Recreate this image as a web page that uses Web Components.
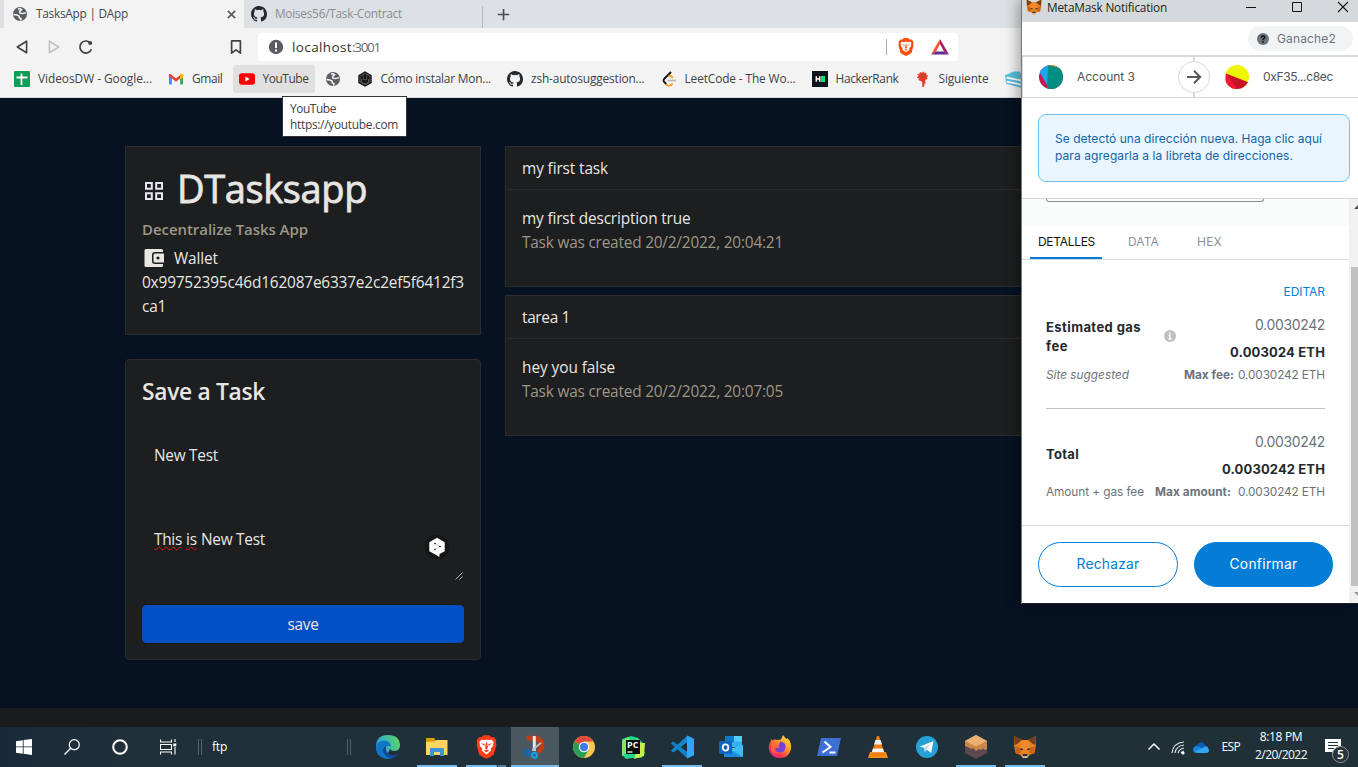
<!DOCTYPE html>
<html lang="es">
<head>
<meta charset="utf-8">
<title>TasksApp | DApp</title>
<style>
html,body{margin:0;height:100%;overflow:hidden;background:#061122}
body{font-family:"Open Sans","Noto Sans",sans-serif}
</style>
</head>
<body>
<desktop-screen></desktop-screen>
<script>
const GLOBE='<circle cx="8" cy="8" r="7" fill="#5a5f64"/><path d="M1.500 8.500 5 9l2.200 1.200v1.600l1.800.8-.4 2M6 3.200 8 2.600l1.600 1.200L7.600 5.400l.4 1.800 2.400.4 3.600-1" fill="none" stroke="#f3f3f3" stroke-width="1.500"/>';
const GITHUB='<path fill="#24292e" d="M8 0C3.58 0 0 3.58 0 8c0 3.54 2.29 6.53 5.47 7.59.4.07.55-.17.55-.38 0-.19-.01-.82-.01-1.49-2.01.37-2.53-.49-2.69-.94-.09-.23-.48-.94-.82-1.13-.28-.15-.68-.52-.01-.53.63-.01 1.08.58 1.23.82.72 1.21 1.87.87 2.33.66.07-.52.28-.87.51-1.07-1.78-.2-3.64-.89-3.64-3.95 0-.87.31-1.59.82-2.15-.08-.2-.36-1.02.08-2.12 0 0 .67-.21 2.2.82a7.4 7.4 0 0 1 4 0c1.53-1.04 2.2-.82 2.2-.82.44 1.1.16 1.92.08 2.12.51.56.82 1.27.82 2.15 0 3.07-1.87 3.75-3.65 3.95.29.25.54.73.54 1.48 0 1.07-.01 1.93-.01 2.2 0 .21.15.46.55.38A8 8 0 0 0 16 8c0-4.42-3.58-8-8-8z"/>';
const FOX='<path fill="#e8821e" d="M1 1l8 4h6l8-4 0 9-1.500 8-5 2-2.500 3h-4l-2.500-3-5-2L1 10z"/><path fill="#763e1a" d="M1 1l8 4-5 4-2.500 1zM23 1l-8 4 5 4 2.500 1z"/><path fill="#f08a2c" d="M9 5h6l2 8-5 2-5-2z"/><path fill="#cd6116" d="M2 11l5 2 1 5-5 1zM22 11l-5 2-1 5 5 1z"/><path fill="#233447" d="M6.500 13.500l3 0 .5 1.800-2.500-.5zM17.500 13.500l-3 0-.5 1.800 2.500-.5zM9.800 19h4.400l.5 2h-5.400z"/><path fill="#d7c1b3" d="M8 20l1 0 .8 1.500h4.400L15 20h1l-2 3h-4z"/>';
const ICONS={
globe:['0 0 16 16',GLOBE],
github:['0 0 16 16',GITHUB],
close:['0 0 16 16','<path d="M3.500 3.500l9 9M12.500 3.500l-9 9" stroke="#55585c" stroke-width="1.9"/>'],
plus:['0 0 16 16','<path d="M8 2v12M2 8h12" stroke="#4d5155" stroke-width="1.8"/>'],
back:['0 0 16 16','<path d="M12.600 2.200v11.600L3.300 8z" fill="none" stroke="#3f4144" stroke-width="1.6" stroke-linejoin="round"/>'],
fwd:['0 0 16 16','<path d="M3.400 2.200v11.600L12.700 8z" fill="none" stroke="#bfc1c3" stroke-width="1.6" stroke-linejoin="round"/>'],
reload:['0 0 16 16','<path d="M13.500 10.200A6 6 0 1 1 12.200 3.800" fill="none" stroke="#3f4144" stroke-width="1.7"/><circle cx="12.200" cy="4" r="2" fill="#3f4144"/>'],
mark:['0 0 16 16','<path d="M3.600 1.800h8.800v12.400L8 10.800l-4.400 3.400z" fill="none" stroke="#3f4144" stroke-width="1.7" stroke-linejoin="round"/>'],
warn:['0 0 16 16','<circle cx="8" cy="8" r="7.200" fill="#5a5d62"/><path d="M8 3.500v5.500M8 10.500v2" stroke="#fff" stroke-width="2"/>'],
brave:['0 0 18 20','<path fill="#fb4d0a" d="M5 1.500L6.500 0h5L13 1.500l2.500.2L17.500 4.500 17 6l.5 2-2.200 8.500L12 18.800 9 20l-3-1.200-3.300-2.300L.5 8 1 6 .5 4.500 2.500 1.700z"/><path fill="#fff" d="M4 4.200l2.500.3L9 4l2.500.5 2.500-.3 1.200 2-.7 1.600.3 1.200-2.300 2.600.6 1.600L9 16l-4.100-2.800.6-1.600L3.200 9l.3-1.200-.7-1.600z"/><path fill="#fb4d0a" d="M4.800 7.200l2.600.4-.3 1.400zM13.200 7.200l-2.600.4.3 1.400zM8.600 7h.8l.6 4L9 12l-1-1zM7 13.200l2-.6 2 .6-2 1z"/>'],
bravebig:['0 0 18 20','<path fill="#fb3d1a" d="M5 1.500L6.500 0h5L13 1.500l2.500.2L17.500 4.500 17 6l.5 2-2.200 8.500L12 18.800 9 20l-3-1.200-3.300-2.300L.5 8 1 6 .5 4.500 2.500 1.700z"/><path fill="#fff" d="M4.500 3.700l2 .4L9 3.700l2.500.4 2-.4 1.700 2.300-.6 1.600.2 1.200-2.300 2.600.6 1.600L9 16.500 4.900 13l.6-1.600L3.200 9l.2-1.400L2.800 6z"/><path fill="#fb3d1a" d="M4.500 6.800l3 .6-.4 1.800zM13.500 6.800l-3 .6.4 1.800zM8.500 6h1l.7 5L9 12l-1.200-1zM6.500 13L9 12.300l2.500.7L9 14.400z"/>'],
bat:['0 0 18 16','<path fill="#ff4f2b" d="M9 0L0 15.500l5-3L9 5z"/><path fill="#9e1f63" d="M9 0l9 15.500-5-3L9 5z"/><path fill="#5f2e91" d="M0 15.500h18l-5-3H5z"/>'],
sheets:['0 0 16 16','<rect width="16" height="16" rx="1" fill="#0f9d58"/><path d="M2.500 6.500h11M7.500 2.500v11.500" stroke="#fff" stroke-width="1.800"/>'],
gmail:['0 0 16 16','<path d="M1 3.500h2.800v10H2A1 1 0 0 1 1 12.500z" fill="#4285f4"/><path d="M12.200 3.500H15v9a1 1 0 0 1-1 1h-1.800z" fill="#34a853"/><path d="M1.200 3.700 8 9l6.800-5.300" fill="none" stroke="#ea4335" stroke-width="2.700"/><path d="M12.200 4l1.500-1.300Q15 2.600 15 4v2.500l-2.800 2z" fill="#fbbc04"/>'],
youtube:['0 0 16 16','<rect y="2.300" width="16" height="11.500" rx="2.800" fill="#f00"/><path d="M6.300 5.600v5L10.700 8z" fill="#fff"/>'],
hex:['0 0 16 16','<path d="M8 .3l6.700 3.900v7.700L8 15.800 1.300 11.900V4.200z" fill="#111"/><path d="M8 2.200l5 2.900v5.900l-5 2.900L3 11V5.100z" fill="none" stroke="#777" stroke-width=".7"/><path d="M6.300 3.500v5.300h3.400V3.500M4.500 8v3L8 13l3.500-2V8" stroke="#777" fill="none" stroke-width=".7"/>'],
leet:['0 0 16 16','<path d="M10 1 3 8.200Q2 9.500 3 10.700l2.500 2.700" fill="none" stroke="#111" stroke-width="1.900"/><path d="M5 13l1.200 1.300q1.600 1.200 3.500 0l2-1.800M7.500 5.200q2-1 3 .2l1.500 1.500" fill="none" stroke="#f9a11b" stroke-width="1.900"/><path d="M6.500 9.500H15" stroke="#b8b8b8" stroke-width="1.800"/>'],
hr:['0 0 16 16','<rect width="16" height="16" fill="#0e141e"/><path d="M4.300 5.200v5.600M7.700 5.200v5.600M4 8h4" stroke="#fff" stroke-width="1.500"/><path d="M9 5h4v6H9z" fill="#00e867"/>'],
rooster:['0 0 16 16','<path d="M5 1.500l2 .8L8.300.8l.8 1.600 2-.5-.2 2L13 5l-1.700 1 1 2-2 .2-.5 2.500.7 1.500L9 12v3.500H7.500V11L5.500 9.500 3.600 9 5 7.500 2 6.500l2-1.500L2.500 3.500l2.200-.3z" fill="#e8381f" stroke="#e8381f" stroke-width=".6"/><circle cx="8" cy="5.500" r="1.300" fill="#8b5a4f"/>'],
cyan:['0 0 16 16','<path d="M0 4l8-3.500h6L16 6v10L1 12z" fill="#5bbfdd"/><path d="M1.500 6.200 16 9M1.500 10 16 13" stroke="#fff" stroke-width="1.600"/>'],
grid:['0 0 20 20','<path d="M2 2h5.800v5.800H2zM12.200 2H18v5.800h-5.800zM2 12.200h5.800V18H2zM12.200 12.200H18V18h-5.800z" fill="none" stroke="#e8e6f0" stroke-width="2"/>'],
wallet:['0 0 20 20','<path fill="#e8e6e3" d="M2 1h15.500q1.500 0 1.500 1.500V4h-8Q8 4 8 7v6q0 3 3 3h8v1.500q0 1.500-1.500 1.500H2Q.5 19 .5 17.500v-15Q.5 1 2 1z"/><path fill="#e8e6e3" fill-rule="evenodd" d="M11 5.500h9v9h-9q-1.500 0-1.500-1.500V7q0-1.500 1.500-1.500zM14 8.400a1.600 1.600 0 1 0 .01 0z"/>'],
deepl:['0 0 24 24','<circle cx="12" cy="12" r="12" fill="#151617"/><path d="M12 2.800l7.700 4.400v9L14.500 19l-.2 3-3-2L4.300 16.200v-9z" fill="#fff"/><path d="M10 8.500l5 3L10 14.500" fill="none" stroke="#999" stroke-width=".5"/><circle cx="10" cy="8.500" r=".8"/><circle cx="15" cy="11.500" r=".8"/><circle cx="10" cy="14.500" r=".8"/>'],
grip:['0 0 8 8','<path d="M.5 7.500l7-7M4.500 7.500l3-3" stroke="#bbb" stroke-width=".9"/>'],
fox:['0 0 24 24',FOX],
min:['0 0 12 12','<path d="M1 6.500h10" stroke="#111"/>'],
max:['0 0 12 12','<path d="M1.500 1.500h9v9h-9z" fill="none" stroke="#111"/>'],
x:['0 0 12 12','<path d="M1 1l10 10M11 1 1 11" stroke="#111" stroke-width="1.1"/>'],
q:['0 0 12 12','<circle cx="6" cy="6" r="6" fill="#6a737d"/><path d="M4.200 4.700q.2-1.700 1.800-1.700t1.800 1.400Q7.800 5.400 6.100 6v1.200M6.100 8.200v1.500" fill="none" stroke="#111" stroke-width="1.500"/>'],
av1:['0 0 24 24','<defs><clipPath id="c"><circle cx="12" cy="12" r="12"/></clipPath></defs><g clip-path="url(#c)"><path fill="#c8144f" d="M0 0h24v24H0z"/><path fill="#f19e02" d="M8 0h16v6z"/><path fill="#18a7f2" d="M3-2h7v22H8L0 6z"/><path fill="#018e83" d="M9 0l15 3.500V24H8z"/></g>'],
av2:['0 0 24 24','<defs><clipPath id="c"><circle cx="12" cy="12" r="12"/></clipPath></defs><g clip-path="url(#c)"><path fill="#f0f500" d="M0 0h24v24H0z"/><path fill="#c81424" d="M1 8.500l23 9V24H0z"/><path fill="#fb1836" d="M1 8.500 12 24H0z"/></g>'],
arrow:['0 0 16 16','<path d="M1 8h13M8 1.800 14.200 8 8 14.200" fill="none" stroke="#555a5c" stroke-width="2"/>'],
info:['0 0 12 12','<circle cx="6" cy="6" r="6" fill="#bbc0c5"/><path d="M6 2.300v1.500M4.600 5.300H6v3.500M4.500 9h3" fill="none" stroke="#fff" stroke-width="1.400"/>'],
win:['0 0 16 16','<path fill="#fff" d="M0 2.200l6.800-1v6.300H0zM7.600 1.100 16 0v7.500H7.600zM0 8.300h6.800v6.400L0 13.800zM7.600 8.300H16V16l-8.400-1.200z"/>'],
search:['0 0 16 16','<circle cx="10.300" cy="5.700" r="5" fill="none" stroke="#fff" stroke-width="1.200"/><path d="M6.700 9.300.5 15.500" stroke="#fff" stroke-width="1.400"/>'],
cortana:['0 0 16 16','<circle cx="8" cy="8" r="6.800" fill="none" stroke="#fff" stroke-width="2"/>'],
taskview:['0 0 17 16','<path d="M.5.500v2.500h11V.5M.5 15.500V13h11v2.500M.5 5.500h11v5H.5zM15 0v3M15 8v7.500" fill="none" stroke="#fff" stroke-width="1.100"/><path d="M13.300 4.500h3v2.800h-3z" fill="#fff"/>'],
edge:['0 0 24 24','<defs><linearGradient id="a" x1="0" x2="1" y1=".3"><stop stop-color="#2aa4dc"/><stop offset="1" stop-color="#5fd95a"/></linearGradient></defs><path d="M0 12Q0 0 12 0t12 11q-.5 5-6 5-4.500-.5-3.500-3l-3 6-9 1Q0 16 0 12z" fill="url(#a)"/><path d="M0 12Q1 5.500 8 5.500q6.500.5 7 6l-3-.5q-3 0-3 4 1 6 8 5.500 2.500-.3 4.500-1.500Q18 24 12 24 1 23.500 0 12z" fill="#1176c8"/><path d="M10 10.500q-5 3.500-1.500 9 2.500 3.500 6.500 4.200 4.500-1 7-5-5 2.600-9 .3-4-2.500-3-8.500z" fill="#12479a"/>'],
folder:['0 0 24 24','<path d="M1 3h8l1.500 2H11v6H1z" fill="#d79b12"/><path d="M1 7l9-.5 1.500-1.500h11V20H1z" fill="#fcd462"/><path d="M5 14q0-1 1-1h12q1 0 1 1v7h-4v-4H9v4H5z" fill="#3d93d9"/>'],
snip:['0 0 24 24','<path d="M3 1.500Q17-2 20.500 6T16 19l-2.500-2.500q6-7-1-10.500Q8 4.500 5 6z" fill="#c63c11"/><path d="M9.800 1h3v15h-3z" fill="#e8e8e8"/><path d="M19 8l-9 8-1.500-1.500 8.500-7z" fill="#b9bdc1"/><circle cx="4.500" cy="17.500" r="2.600" fill="none" stroke="#1268b0" stroke-width="2.400"/><circle cx="11.500" cy="20.300" r="2.500" fill="none" stroke="#1b9de0" stroke-width="2.200"/>'],
chrome:['0 0 24 24','<circle cx="12" cy="12" r="11" fill="#fbc94a"/><path d="M12 12 2.500 6.500A11 11 0 0 1 21.500 6.500H12z" fill="#e04a3f"/><path d="M2.500 6.500A11 11 0 0 0 12 23l4.700-8.300L12 12z" fill="#2a9d58"/><circle cx="12" cy="12" r="5.200" fill="#fff"/><circle cx="12" cy="12" r="4.200" fill="#3e7ce8"/>'],
pycharm:['0 0 24 24','<path d="M1 4l9-3 7 2 5 5-1 5 3 5-4 5-9 0-6 1-4-4z" fill="#21d789"/><path d="M15 3l5 5 4 0-1 13-10 3 5-14z" fill="#c8f04b"/><path d="M1 6l6-4 3 4-5 12-4 3z" fill="#7fe86a"/><path d="M5 5h14v14H5z" fill="#080808"/><path d="M6.500 17h5" stroke="#fff" stroke-width="1.300"/>'],
vscode:['0 0 24 24','<path d="M17 1 1 15.500 3.300 17.500 20 5z" fill="#1286cf"/><path d="M17 23 1 8.500 3.300 6.500 20 19z" fill="#1380c8"/><path d="M17 .5l7 3.200v16.600l-7 3.200z" fill="#30a5f4"/>'],
outlook:['0 0 24 24','<path d="M6 1h17v11H6z" fill="#31b3ec"/><path d="M6 1h9v6H6z" fill="#1077c5"/><path d="M15 1h8v5.500h-8z" fill="#50d0f8"/><path d="M5 10l10 4 9-4v12H5z" fill="#198be0"/><path d="M24 10v12L10 14z" fill="#3dbbf2"/><rect y="6" width="13" height="13" rx="1" fill="#0f66bd"/><ellipse cx="6.500" cy="12.500" rx="2.800" ry="3.200" fill="none" stroke="#fff" stroke-width="1.800"/>'],
firefox:['0 0 24 24','<defs><linearGradient id="a" x1="1" x2=".2" y2="1"><stop stop-color="#fff04a"/><stop offset=".4" stop-color="#ffa322"/><stop offset=".8" stop-color="#fb304e"/><stop offset="1" stop-color="#e62b9a"/></linearGradient></defs><path d="M2.500 4l2 1.500Q7 4 8.500 5L13 4.500 15 0q2 3 4 4l.5-1Q24 8 23 14q-2 9-11 9T.8 14Q.5 9 3 6z" fill="url(#a)"/><path d="M12 6.500q6 .5 5.500 6-1 5.500-6 5-4-1-4-4l4-1-1-2 1-2z" fill="#7542d6"/><path d="M3 8q5-1 8 2.500L6 13q0 5 6 5-7 2-9-3z" fill="#ff7139" opacity=".8"/>'],
ps:['0 0 24 24','<path d="M4 3h20l-4 18H0z" fill="#3c6fd1"/><path d="M7.500 6.500 13.500 12 5.500 17.500M12.500 17.500h6" fill="none" stroke="#fff" stroke-width="2"/>'],
vlc:['0 0 24 24','<path d="M4 17h16l2 6H2z" fill="#f48b13"/><path d="M11 1h2l6 19q-7 2.500-14 0z" fill="#f07d10"/><path d="M9.500 5h5l1.600 4.500H8zM7 13.500h10l1.200 3.800H5.700z" fill="#f1f1f1"/>'],
telegram:['0 0 24 24','<circle cx="12" cy="12" r="11" fill="#27a0d8"/><path d="M4.500 11.700 18.500 6l-2.300 12-4.400-3.200-2.100 2-.4-4z" fill="#fff"/><path d="M9.300 12.800l7-5-4.800 6.700-1.800 2.300z" fill="#c2dcee"/>'],
ganache:['0 0 24 24','<path d="M12 0l11 6v12l-11 6-11-6V6z" fill="#5e4850"/><path d="M12 0l11 6v8l-2 1-2-1.500-2 1.500-2-1-3 2-3-3-2 1-3-2-3-1V6z" fill="#c98747"/><path d="M12 0l11 6-11 5.500L1 6z" fill="#e9b072"/>'],
up:['0 0 16 16','<path d="M2.500 10.500 8 5l5.500 5.500" fill="none" stroke="#fff" stroke-width="1.500"/>'],
wifi:['0 0 16 16','<g fill="none" stroke="#dfe3e5" stroke-width="1.200"><path d="M2 14Q3 4 14 3M5 14q1-7 9-8M8 14q1-4 6-5M11 14q.5-1.500 3-2"/></g><circle cx="13" cy="14" r="1.600" fill="#fff"/>'],
cloud:['0 0 16 11','<path d="M4 3Q6-.5 9.500.5 12 1 12.800 4L8 8 1 7Q1 4 4 3z" fill="#0b5db8"/><path d="M3 11Q0 10.500 0 7.500T4 4L16 8.500Q15.500 11 13 11z" fill="#1683da"/><path d="M5 11 1.500 10l8-4Q13 3 15 5.500q2.500 5-2 5.500z" fill="#32a7ef"/>'],
note:['0 0 16 16','<path d="M0 0h16v13H10l-3 3v-3H0z" fill="#fff"/><path d="M3 3.500h10M3 6.500h10M3 9.500h6" stroke="#20303a" stroke-width="1.200"/>']
};
function define(name,html,css){
  const tpl=document.createElement('template');
  tpl.innerHTML='<style>:host{display:block;box-sizing:border-box}*{box-sizing:border-box}'+css+'</style>'+html;
  customElements.define(name,class extends HTMLElement{
    connectedCallback(){
      if(this.shadowRoot)return;
      this.attachShadow({mode:'open'}).append(tpl.content.cloneNode(true));
    }
  });
}
const T=(w,t,c='')=>`<ui-text w="${w}" class="${c}">${t}</ui-text>`;
const I=(n,w,h=w,c='')=>`<ui-icon name="${n}" w="${w}" h="${h}" class="${c}"></ui-icon>`;

define('desktop-screen','<browser-window></browser-window><wallet-window></wallet-window><task-bar></task-bar>',
 ':host{position:relative;width:1358px;height:767px;overflow:hidden;display:flex;flex-direction:column}browser-window{height:708px}task-bar{margin-top:19px;height:40px}:host{background:#1a1b1c}wallet-window{position:absolute;left:1022px;top:0}');

define('browser-window','<tab-strip></tab-strip><address-bar></address-bar><bookmark-bar></bookmark-bar><tasks-page></tasks-page>',
 ':host{display:flex;flex-direction:column;position:relative}tasks-page{flex:1}');

define('tab-strip',`<div class="tab on">${I('globe',16)}${T(92,'TasksApp | DApp')}${I('close',13,13,'cl')}</div><div class="tab">${I('github',16)}${T(127,'Moises56/Task-Contract')}</div><i></i>${I('plus',15)}`,
 `:host{display:flex;align-items:center;height:28px;background:#dde1e3;padding-left:4px;font-size:11.800px;color:#8a8d90}
 .tab{display:flex;align-items:center;gap:8px;width:238px;height:28px;padding:0 7px}.on{width:240px;padding:0 6px 0 8px;background:#f3f3f3;color:#45484b}.cl{margin-left:auto}.tab ui-text{margin-top:-2px}
 i{width:1px;height:22px;margin-top:6px;background:#b4b8ba}i+ui-icon{margin-left:13px}`);

define('address-bar',`${I('back',16)}${I('fwd',16)}${I('reload',16)}${I('mark',16,16,'mk')}<div class="box">${I('warn',16)}<span><ui-text w="60" class="h">localhost</ui-text><ui-text w="28">:3001</ui-text></span><i></i>${I('brave',16,18)}${I('bat',18,16,'bat')}</div>`,
 `:host{display:flex;align-items:center;height:38px;background:#f3f3f3;padding:0 0 0 14px}
 ui-icon+ui-icon{margin-left:16px}.mk.mk{margin-left:134px}.box{margin-left:14px;width:700px;height:28px;border-radius:4px;background:#fff;display:flex;align-items:center;padding:0 9px 0 10px;font-size:13.500px;color:#6a6e72}
 span{margin-left:8px;display:flex;flex:1}.h{color:#333}i{width:1px;height:16px;background:#aaa;margin-right:11px}.box .bat.bat{margin-left:17px}`);

define('bookmark-bar',[['sheets',114,'VideosDW - Google...'],['gmail',30.5,'Gmail'],['youtube',46,'YouTube'],['globe',0,''],['hex',110.5,'Cómo instalar Mon...'],['github',113.5,'zsh-autosuggestion...'],['leet',111,'LeetCode - The Wo...'],['hr',63,'HackerRank'],['rooster',50,'Siguiente'],['cyan',0,'']].map(([n,w,t],i)=>`<div class="b${i==2?' hot':''}">${I(n,i==9?17:16,i==9?17:16)}${w?T(w,t):''}</div>`).join('')+`<div class="tip">${T(46,'YouTube')}${T(108,'https://youtube.com')}</div>`,
 `:host{display:flex;gap:4px;height:32px;background:#f3f3f3;border-bottom:1px solid #d5d7da;padding:0 0 0 8px;font-size:11.900px;color:#3f4245;position:relative}
 .b{display:flex;align-items:center;gap:8px;padding:0 6px;height:28px;border-radius:3px;margin-top:-1px}.b ui-text{margin-top:-2px}.hot{background:#e0e0e0}
 .tip{position:absolute;left:282px;top:30px;width:125px;height:41px;border:1px solid #333;background:#fff;padding:3px 7px;z-index:3;line-height:16px}.tip ui-text{display:block}`);

define('tasks-page',`<div class="col"><app-card class="c1"></app-card><save-form></save-form></div><div class="list"><task-card><ui-text slot="t" w="86">my first task</ui-text><ui-text w="168.5">my first description true</ui-text><ui-text slot="d" w="261">Task was created 20/2/2022, 20:04:21</ui-text></task-card><task-card><ui-text slot="t" w="48">tarea 1</ui-text><ui-text w="93">hey you false</ui-text><ui-text slot="d" w="261">Task was created 20/2/2022, 20:07:05</ui-text></task-card></div>`,
 `:host{--dy:1px;background:#061122;display:flex;gap:24px;padding:48px 125px 0;color:#e8e6e3;font-size:15.400px;line-height:24px}.col{width:356px;display:flex;flex-direction:column;gap:24px;flex:none}.list{flex:1;display:flex;flex-direction:column;gap:8px}`);

define('app-card',`<h1>${I('grid',20)}${T(190,'DTasksapp')}</h1><h6>${T(166,'Decentralize Tasks App')}</h6><div class="w">${I('wallet',20)}${T(44,'Wallet')}</div><div>${T(322,'0x99752395c46d162087e6337e2c2ef5f6412f3')}</div><div>${T(24,'ca1')}</div>`,
 `:host{background:#1c1e1f;border:1px solid #2b2c2b;padding:16px;height:189px}h1,h6{--dy:0px}h1{margin:0 0 8px;display:flex;align-items:center;gap:13px;height:48px;font-size:38px;line-height:48px;font-weight:500;-webkit-text-stroke:.8px #e8e6e3;padding-left:2px}h1 ui-icon{margin-top:7px}h1 ui-text{margin-top:2px}h6{margin:0 0 8px;font-size:15px;line-height:21px;height:19px;font-weight:600;color:#9e9689}.w{display:flex;align-items:center;gap:10px;padding-left:2px}div{height:24px}`);

define('save-form',`<h2>${T(123,'Save a Task')}</h2><div class="in">${T(64,'New Test')}</div><div class="ta"><span>${T(28,'This','sp')}${T(11,'is','sp')}${T(64,'New Test')}</span>${I('deepl',24,24,'dl')}${I('grip',8,8,'gr')}</div><div class="bt">${T(31,'save')}</div>`,
 `:host{background:#1c1e1f;border:1px solid #2b2c2b;border-radius:4px;padding:16px;height:301px;display:flex;flex-direction:column}h2{--dy:0px;margin:0;font-size:22.800px;line-height:31px;height:29px;font-weight:600}.in{margin-top:31px;height:38px;padding:7px 12px}.ta{margin-top:47px;height:62px;padding:6px 12px;position:relative}.ta span{display:flex;gap:4px}.sp{--deco:underline wavy #e11 1px}.dl{position:absolute;left:283px;top:14px}.gr{position:absolute;right:1px;bottom:3px}.bt{margin-top:22px;height:38px;border-radius:4px;background:#0250c5;border:1px solid #0a4eb4;display:flex;align-items:center;justify-content:center}`);

define('task-card','<div class="h"><slot name="t"></slot></div><div class="b"><slot></slot><p><slot name="d"></slot></p></div>',
 `:host{background:#1c1e1f;border:1px solid #2b2c2b;height:141px}.h{height:43px;padding:9px 16px;border-bottom:1px solid #2b2c2b}.b{padding:16px;height:80px}p{margin:0;color:#9e9689}`);

define('wallet-window',`<div class="title">${I('fox',16)}${T(120,'MetaMask Notification')}<b></b>${I('min',12)}${I('max',12)}${I('x',12)}</div>
<div class="net"><span>${I('q',12)}${T(59,'Ganache2')}</span></div>
<div class="acc"><div class="half">${I('av1',24)}${T(58,'Account 3')}</div><div class="half r">${I('av2',24)}${T(70,'0xF35...c8ec')}</div><div class="go">${I('arrow',16)}</div></div>
<div class="ban"><p>${T(267,'Se detectó una dirección nueva. Haga clic aquí')}${T(238,'para agregarla a la libreta de direcciones.')}</p></div>
<div class="lower"><div class="main"><div class="strip"><u></u></div><div class="tabs"><span class="on">${T(57,'DETALLES')}</span>${T(31,'DATA')}${T(25,'HEX')}</div>
<fee-panel></fee-panel><div class="foot"><span>${T(63,'Rechazar')}</span><span class="ok">${T(68,'Confirmar')}</span></div></div><div class="bar"><s></s><em></em><s class="dn"></s></div></div>`,
 `:host{width:336px;height:604px;background:#fff;border-bottom:1px solid #222;box-shadow:-1px 0 0 #777,-5px 0 12px rgba(0,0,0,.3);font-family:Inter,Lato,sans-serif;font-size:12px;color:#4d5358;display:flex;flex-direction:column}
 .title{height:22px;flex:none;background:#d6d9dc;display:flex;align-items:center;padding:0 9px 9px 4px;font:11.800px "Open Sans",sans-serif;color:#222;gap:5px}.title b{flex:1}.title ui-icon+ui-icon{margin-left:29px}
 .net{height:33px;flex:none;display:flex;justify-content:flex-end;padding:4px 5px 0 0}.net span{width:105px;height:25px;border-radius:13px;background:#f2f3f4;display:flex;align-items:center;gap:8px;padding-left:9px;color:#6a737d}
 .net ui-text,.half ui-text,.foot ui-text{margin-top:-1px}
 .acc{height:43px;flex:none;border:1px solid #d6d9dc;border-top-width:2px;border-right:0;display:flex;position:relative}.half{display:flex;align-items:center;gap:14px;width:172px;padding-left:16px;border-right:2px solid #d6d9dc;flex:none}.half.r{border:0;padding-left:30px;width:163px}.go{position:absolute;left:155px;top:4px;width:32px;height:32px;border:1px solid #d6d9dc;border-radius:50%;background:#fff;display:flex;align-items:center;justify-content:center}
 .ban{height:100px;flex:none;padding:16px 8px 0 16px}.ban p{margin:0;height:68px;border:1px solid #6fc3f7;border-radius:8px;background:#eaf6ff;color:#1464a5;padding:15px 16px;line-height:17px}.ban ui-text{display:block}
 .lower{flex:1;display:flex}.main{width:327px;flex:none;display:flex;flex-direction:column}
 .strip{height:28px;background:#fafbfb;border-top:1px solid #d6d9dc;padding-left:24px}.strip u{display:block;width:218px;height:3px;border:1px solid #858b91;border-top:0;border-radius:0 0 4px 4px}
 .tabs{height:34px;border-bottom:1px solid #d6d9e0;display:flex;gap:38px;padding-left:8px;line-height:32px;color:#8c9196;font-size:12px}.tabs .on{width:72px;padding-left:8px;border-bottom:2px solid #037dd6;color:#111;height:33px;margin-right:-12px}
 fee-panel{height:265px}.foot{border-top:1px solid #d6d9dc;height:78px;padding:16px;display:flex;gap:16px;font-size:13.800px}.foot span{width:140px;height:45px;border-radius:23px;border:1px solid #037dd6;color:#037dd6;display:flex;align-items:center;justify-content:center;flex:none}.foot .ok{background:#037dd6;color:#fff;width:139px}
 .bar{flex:1;background:#f1f1f1;display:flex;flex-direction:column;border-top:1px solid #d6d9dc;padding-left:2px;overflow:hidden}.bar em{height:319px;background:#c1c1c1}.bar s{height:68px;padding:6px 0 0 3px}.bar s::before{content:"";display:block;width:0;border:4px solid transparent;border-top:0;border-bottom:4px solid #505050}.bar .dn{height:16px}.bar .dn::before{border-bottom:0;border-top:4px solid #999}`);

define('fee-panel',`<div class="ed">${T(41.5,'EDITAR')}</div><div class="row a"><div class="l"><b>${T(95,'Estimated gas')}${T(22,'fee')}</b><i>${T(83,'Site suggested')}</i></div>${I('info',12,12,'inf')}<div class="r"><span class="n">${T(70,'0.0030242')}</span><b>${T(95,'0.003024 ETH')}</b><span class="m"><strong>${T(50,'Max fee:')}</strong>${T(87,'0.0030242 ETH')}</span></div></div>
<div class="row t"><div class="l"><b>${T(33,'Total')}</b><span class="am">${T(98,'Amount + gas fee')}</span></div><div class="r"><span class="n">${T(70,'0.0030242')}</span><b>${T(103,'0.0030242 ETH')}</b><span class="m t2"><strong>${T(76,'Max amount:')}</strong>${T(87,'0.0030242 ETH')}</span></div></div>`,
 `:host{padding:22px 24px 0;font-size:11.800px;color:#6a737d}.ed{height:20px;line-height:20px;display:flex;justify-content:flex-end;color:#037dd6;font-size:12px}
 .row{display:flex;height:107px}.a{border-bottom:1px solid #bbc0c5}.l,.r{display:flex;flex-direction:column}.l{width:98px;padding-top:16px}.l b,.r b{font-size:13px;color:#24292e;font-weight:700}.l b{line-height:19px;height:38px}.l b ui-text{display:block}.l i{margin-top:9px;line-height:20px}.inf{margin:28px 0 0 20px;align-self:flex-start}
 .r{margin-left:auto;align-items:flex-end}.n{font-size:14px;line-height:20px;height:20px;margin-top:13px}.r b{line-height:20px;height:20px;margin-top:7px}.m{display:flex;gap:4px;line-height:20px;margin-top:3px}.t2{gap:7px}
 .t{padding-top:10px}.t .n{margin-top:13px}.t .l{padding-top:26px}.t .l b{height:19px}.am{line-height:20px;margin-top:18px}`);

define('task-bar',`<div class="sys">${I('win',16)}</div><div class="sys">${I('search',16)}</div><div class="sys">${I('cortana',16)}</div><div class="sys">${I('taskview',17,16)}</div><i></i>${T(15,'ftp','ftp')}<i class="i2"></i><div class="apps">${['edge','folder','bravebig','snip','chrome','pycharm','vscode','outlook','firefox','ps','vlc','telegram','ganache','fox'].map((n,k)=>`<div class="app${[1,2,3,6,12,13].includes(k)?' run':''}${k==3?' on':''}${k==2?' multi':''}">${k==2?I(n,21,24):I(n,24)}${n=='pycharm'?'<em>PC</em>':''}</div>`).join('')}</div>
<div class="tray">${I('up',16)}${I('wifi',16,16,'wf')}${I('cloud',16,11,'od')}${T(18.5,'ESP','esp')}<div class="clk">${T(42.5,'8:18 PM')}${T(52,'2/20/2022')}</div><div class="nt">${I('note',16)}<b>5</b></div></div>`,
 `:host{display:flex;align-items:center;background:linear-gradient(90deg,#1a293a,#20303a 10%,#203037);color:#fff;font-size:12px}
 .sys{width:48px;display:flex;justify-content:center}i{width:4px;height:16px;border:solid #51606a;border-width:0 1px;margin-left:6px}.ftp{margin:-2px 0 0 10px}.i2{margin-left:120px}
 .apps{display:flex;gap:1px;margin-left:13px;align-self:stretch}.app{width:48px;height:40px;display:flex;align-items:center;justify-content:center;position:relative}.on{background:#4a585f}.run::after{content:"";position:absolute;left:4px;right:4px;bottom:0;height:2px;background:#76b9ed}.on::after{left:0;right:0}.multi::after{background:linear-gradient(90deg,#76b9ed 31px,#20303a 31px,#20303a 32px,#4f7f9f 32px)}
 .app em{position:absolute;left:18px;top:13px;font:bold 9px "Open Sans",sans-serif;line-height:10px;color:#fff}
 .tray{display:flex;align-items:center;margin-left:auto;padding-right:17px;align-self:stretch}.tray>ui-icon:first-child{margin-right:-1px;margin-left:-1px}.wf{margin-left:9px}.od{margin-left:7px}.esp{margin:-2px 0 0 13px}.clk{width:52px;margin:-2px 0 0 15px;display:flex;flex-direction:column;align-items:center;line-height:18px}.nt{position:relative;margin-left:18px;height:16px}.nt b{position:absolute;left:7px;top:7px;width:17px;height:17px;border-radius:50%;background:#2b3136;border:1px solid #8a9296;font:600 12px/15px "Open Sans",sans-serif;text-align:center}`);

customElements.define('ui-icon',class extends HTMLElement{
  connectedCallback(){
    if(this.shadowRoot)return;
    const [vb,body]=ICONS[this.getAttribute('name')],w=this.getAttribute('w'),h=this.getAttribute('h');
    this.attachShadow({mode:'open'}).innerHTML=`<style>:host{display:block;flex:none;width:${w}px;height:${h}px}svg{display:block}</style><svg width="${w}" height="${h}" viewBox="${vb}">${body}</svg>`;
  }
});
/* Single-line label whose tracking is tuned to a fixed width */
customElements.define('ui-text',class extends HTMLElement{
  connectedCallback(){
    if(this.shadowRoot)return;
    const w=+this.getAttribute('w');
    this.attachShadow({mode:'open'}).innerHTML=`<style>:host{display:inline-block;vertical-align:top;white-space:nowrap;flex:none}span{display:block;width:max-content;padding-top:var(--dy,0px);margin-bottom:calc(-1*var(--dy,0px));text-decoration:var(--deco,none);text-decoration-skip-ink:none}</style><span><slot></slot></span>`;
    const n=this.textContent.length,nat=this.shadowRoot.querySelector('span').getBoundingClientRect().width;
    if(nat){this.style.letterSpacing=((w-nat)/n).toFixed(3)+'px';this.style.width=w+'px';}
  }
});
</script>
</body>
</html>
